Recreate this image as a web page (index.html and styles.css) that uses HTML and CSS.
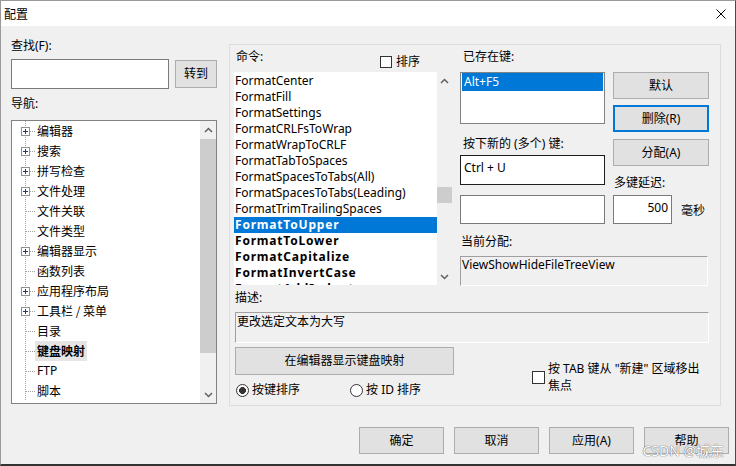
FILE: index.html
```html
<!DOCTYPE html>
<html lang="zh-CN">
<head>
<meta charset="utf-8">
<title>配置</title>
<link rel="stylesheet" href="styles.css">
</head>
<body>
<div class="window">
  <div class="titlebar">
    <span class="title">配置</span>
    <svg class="close" width="10" height="10" viewBox="0 0 10 10"><path d="M0.5 0.5L9.5 9.5M9.5 0.5L0.5 9.5" stroke="#000" stroke-width="1" fill="none"/></svg>
  </div>

  <div class="main">
    <div class="left">
      <div class="lbl find-lbl">查找(F):</div>
      <div class="find-row">
        <div class="edit find-edit"></div>
        <button class="btn go">转到</button>
      </div>
      <div class="lbl nav-lbl">导航:</div>
      <div class="tree">
        <ul class="tree-items">
          <li><span class="twig"><svg class="plus" width="9" height="9" viewBox="0 0 9 9" shape-rendering="crispEdges"><rect x="0.5" y="0.5" width="8" height="8" fill="#fff" stroke="#919191"/><path d="M2 4.5h5M4.5 2v5" stroke="#1e3a6e"/></svg></span><span class="node">编辑器</span></li>
          <li><span class="twig"><svg class="plus" width="9" height="9" viewBox="0 0 9 9" shape-rendering="crispEdges"><rect x="0.5" y="0.5" width="8" height="8" fill="#fff" stroke="#919191"/><path d="M2 4.5h5M4.5 2v5" stroke="#1e3a6e"/></svg></span><span class="node">搜索</span></li>
          <li><span class="twig"><svg class="plus" width="9" height="9" viewBox="0 0 9 9" shape-rendering="crispEdges"><rect x="0.5" y="0.5" width="8" height="8" fill="#fff" stroke="#919191"/><path d="M2 4.5h5M4.5 2v5" stroke="#1e3a6e"/></svg></span><span class="node">拼写检查</span></li>
          <li><span class="twig"><svg class="plus" width="9" height="9" viewBox="0 0 9 9" shape-rendering="crispEdges"><rect x="0.5" y="0.5" width="8" height="8" fill="#fff" stroke="#919191"/><path d="M2 4.5h5M4.5 2v5" stroke="#1e3a6e"/></svg></span><span class="node">文件处理</span></li>
          <li><span class="twig leaf"></span><span class="node">文件关联</span></li>
          <li><span class="twig leaf"></span><span class="node">文件类型</span></li>
          <li><span class="twig"><svg class="plus" width="9" height="9" viewBox="0 0 9 9" shape-rendering="crispEdges"><rect x="0.5" y="0.5" width="8" height="8" fill="#fff" stroke="#919191"/><path d="M2 4.5h5M4.5 2v5" stroke="#1e3a6e"/></svg></span><span class="node">编辑器显示</span></li>
          <li><span class="twig leaf"></span><span class="node">函数列表</span></li>
          <li><span class="twig"><svg class="plus" width="9" height="9" viewBox="0 0 9 9" shape-rendering="crispEdges"><rect x="0.5" y="0.5" width="8" height="8" fill="#fff" stroke="#919191"/><path d="M2 4.5h5M4.5 2v5" stroke="#1e3a6e"/></svg></span><span class="node">应用程序布局</span></li>
          <li><span class="twig"><svg class="plus" width="9" height="9" viewBox="0 0 9 9" shape-rendering="crispEdges"><rect x="0.5" y="0.5" width="8" height="8" fill="#fff" stroke="#919191"/><path d="M2 4.5h5M4.5 2v5" stroke="#1e3a6e"/></svg></span><span class="node">工具栏 / 菜单</span></li>
          <li><span class="twig leaf"></span><span class="node">目录</span></li>
          <li><span class="twig leaf"></span><span class="node current">键盘映射</span></li>
          <li><span class="twig leaf"></span><span class="node">FTP</span></li>
          <li><span class="twig leaf"></span><span class="node">脚本</span></li>
        </ul>
        <div class="vscroll tree-scroll">
          <div class="arrow"><svg width="9" height="6" viewBox="0 0 9 6"><polyline points="1,5 4.5,1.5 8,5" fill="none" stroke="#606060" stroke-width="1.5"/></svg></div>
          <div class="thumb tree-thumb"></div>
          <div class="track"></div>
          <div class="arrow"><svg width="9" height="6" viewBox="0 0 9 6"><polyline points="1,1 4.5,4.5 8,1" fill="none" stroke="#606060" stroke-width="1.5"/></svg></div>
        </div>
      </div>
    </div>

    <div class="group">
      <div class="mid">
        <div class="cmd-head">
          <div class="lbl cmd-lbl">命令:</div>
          <label class="sort"><span class="check"></span><span>排序</span></label>
        </div>
        <div class="cmd-list">
          <ul class="items">
            <li>FormatCenter</li>
            <li>FormatFill</li>
            <li>FormatSettings</li>
            <li>FormatCRLFsToWrap</li>
            <li>FormatWrapToCRLF</li>
            <li>FormatTabToSpaces</li>
            <li>FormatSpacesToTabs(All)</li>
            <li>FormatSpacesToTabs(Leading)</li>
            <li>FormatTrimTrailingSpaces</li>
            <li class="bold selected">FormatToUpper</li>
            <li class="bold">FormatToLower</li>
            <li class="bold">FormatCapitalize</li>
            <li class="bold">FormatInvertCase</li>
            <li class="bold">FormatAddIndent</li>
          </ul>
          <div class="vscroll cmd-scroll">
            <div class="arrow"><svg width="9" height="6" viewBox="0 0 9 6"><polyline points="1,5 4.5,1.5 8,5" fill="none" stroke="#606060" stroke-width="1.5"/></svg></div>
            <div class="thumb cmd-thumb"></div>
            <div class="track"></div>
            <div class="arrow"><svg width="9" height="6" viewBox="0 0 9 6"><polyline points="1,1 4.5,4.5 8,1" fill="none" stroke="#606060" stroke-width="1.5"/></svg></div>
          </div>
        </div>
      </div>

      <div class="right">
        <div class="rcol">
          <div class="lbl keys-lbl">已存在键:</div>
          <div class="listbox"><div class="sel">Alt+F5</div></div>
          <div class="lbl new-lbl">按下新的 (多个) 键:</div>
          <div class="edit key-edit focus">Ctrl + U</div>
          <div class="edit key-edit2"></div>
        </div>
        <div class="bcol">
          <button class="btn side">默认</button>
          <button class="btn side focused">删除(R)</button>
          <button class="btn side">分配(A)</button>
          <div class="lbl delay-lbl">多键延迟:</div>
          <div class="delay-row">
            <div class="edit delay-edit">500</div>
            <span class="unit">毫秒</span>
          </div>
        </div>
        <div class="assign">
          <div class="lbl cur-lbl">当前分配:</div>
          <div class="ro cur-box">ViewShowHideFileTreeView</div>
        </div>
      </div>

      <div class="desc">
        <div class="lbl desc-lbl">描述:</div>
        <div class="ro desc-box">更改选定文本为大写</div>
      </div>

      <div class="mid-bottom">
        <button class="btn show-map">在编辑器显示键盘映射</button>
        <div class="radios">
          <label class="radio-item"><span class="radio on"></span><span>按键排序</span></label>
          <label class="radio-item second"><span class="radio"></span><span>按 ID 排序</span></label>
        </div>
      </div>

      <div class="right-bottom">
        <label class="tab-opt"><span class="check"></span><span class="tab-text">按 TAB 键从 "新建" 区域移出焦点</span></label>
      </div>
    </div>
  </div>

  <div class="footer">
    <button class="btn foot">确定</button>
    <button class="btn foot">取消</button>
    <button class="btn foot">应用(A)</button>
    <button class="btn foot">帮助</button>
  </div>

  <div class="watermark">CSDN @城东</div>
</div>
</body>
</html>
```

FILE: styles.css
```css
* { box-sizing: border-box; }

html, body {
  margin: 0;
  padding: 0;
}

body {
  width: 736px;
  height: 466px;
  overflow: hidden;
  background: #f0f0f0;
  font-family: "Noto Sans", "Noto Sans CJK SC", sans-serif;
  font-size: 12px;
  color: #000;
}

ul { list-style: none; margin: 0; padding: 0; }

.window {
  position: relative;
  width: 736px;
  height: 466px;
  background: #f0f0f0;
  border-top: 1px solid #9a9a9a;
  border-left: 1px solid #9a9a9a;
  border-right: 1px solid #4a4a4a;
  border-bottom: 2px solid #333;
  display: flex;
  flex-direction: column;
}

.titlebar {
  height: 25px;
  flex: none;
  background: #fff;
  display: flex;
  align-items: center;
  justify-content: space-between;
  padding: 0 9px 0 3px;
}

.title {
  font-family: "Noto Sans CJK SC", sans-serif;
  font-size: 12px;
  line-height: 16px;
}

.close { display: block; }

.lbl {
  line-height: 16px;
  white-space: nowrap;
}

/* buttons */
.btn {
  font: inherit;
  color: #000;
  background: #e1e1e1;
  border: 1px solid #adadad;
  padding: 0;
  margin: 0;
  line-height: 16px;
  text-align: center;
}

.btn.focused {
  border: 2px solid #0078d7;
}

.edit {
  background: #fff;
  border: 1px solid #7a7a7a;
  line-height: 16px;
  padding: 4px 3px 0 3px;
  white-space: nowrap;
}

.edit.focus { border-color: #1e1e1e; }

.ro {
  background: #f0f0f0;
  border-style: solid;
  border-width: 1px;
  border-color: #a0a0a0 #fff #fff #a0a0a0;
  line-height: 16px;
  white-space: nowrap;
}

/* main */
.main {
  display: flex;
  padding-left: 10px;
  column-gap: 12px;
  flex: none;
}

.left {
  width: 206px;
  flex: none;
}

.find-lbl { margin-top: 12px; }

.find-row {
  margin-top: 5px;
  display: flex;
  align-items: center;
  column-gap: 6px;
}

.find-edit {
  width: 158px;
  height: 30px;
}

.go {
  width: 42px;
  height: 28px;
}

.nav-lbl { margin-top: 7px; }

.tree {
  margin-top: 8px;
  height: 284px;
  background: #fff;
  border: 1px solid #828282;
  display: flex;
}

.tree-items {
  flex: 1;
  font-family: "Noto Sans CJK SC", sans-serif;
}

.tree-items li {
  height: 20px;
  display: flex;
  align-items: center;
}

.twig {
  width: 23px;
  height: 20px;
  flex: none;
  display: flex;
  align-items: center;
  background-image:
    repeating-linear-gradient(to bottom, #a0a0a0 0 1px, transparent 1px 2px),
    repeating-linear-gradient(to right, #a0a0a0 0 1px, transparent 1px 2px);
  background-size: 1px 20px, 9px 1px;
  background-position: 13px 0, 14px 10px;
  background-repeat: no-repeat;
}

.plus {
  display: block;
  margin-left: 9px;
}

.node {
  line-height: 20px;
  padding: 0 2px;
  white-space: nowrap;
}

.node.current {
  background: #e5e5e5;
  font-weight: 700;
}

.tree-items li:nth-child(13) .node { font-family: "Noto Sans", sans-serif; }

/* scrollbars */
.vscroll {
  flex: none;
  background: #f0f0f0;
  display: flex;
  flex-direction: column;
}

.vscroll .arrow {
  height: 17px;
  display: flex;
  align-items: center;
  justify-content: center;
}

.vscroll .arrow svg { display: block; }

.vscroll .thumb {
  background: #cdcdcd;
  flex: none;
}

.vscroll .track { flex: 1; }

.tree-scroll { width: 16px; }

.tree-thumb {
  margin-top: 1px;
  height: 214px;
}

/* group box */
.group {
  margin-top: 18px;
  width: 492px;
  height: 362px;
  border: 1px solid #dcdcdc;
  padding: 0 11px 0 4px;
  display: grid;
  grid-template-columns: 219px 249px;
  grid-template-rows: auto auto auto;
  column-gap: 7px;
  align-content: start;
}

.cmd-head {
  height: 27px;
  display: grid;
  grid-template-columns: 146px auto;
}

.cmd-lbl {
  padding-top: 4px;
  padding-left: 2px;
}

.sort {
  margin-top: 9px;
  display: flex;
  align-items: center;
  column-gap: 4px;
  height: 16px;
  line-height: 16px;
}

.check {
  display: block;
  width: 13px;
  height: 13px;
  background: #fff;
  border: 1px solid #333;
  flex: none;
}

.sort .check { width: 12px; height: 12px; }

.cmd-list {
  display: flex;
  height: 213px;
}

.items {
  width: 203px;
  background: #fff;
  padding-top: 1px;
  overflow: hidden;
}

.items li {
  height: 16px;
  line-height: 16px;
  padding-left: 1px;
  white-space: nowrap;
}

.items li.bold {
  font-weight: 700;
  letter-spacing: 0.8px;
}

.items li.selected {
  background: #0078d7;
  color: #fff;
}

.cmd-scroll { width: 15px; }

.cmd-thumb {
  margin-top: 98px;
  height: 16px;
}

/* right side */
.right {
  display: grid;
  grid-template-columns: 145px 96px;
  column-gap: 8px;
  align-content: start;
}

.rcol, .bcol {
  display: flex;
  flex-direction: column;
}

.keys-lbl {
  height: 27px;
  padding-top: 4px;
  padding-left: 3px;
}

.listbox {
  height: 52px;
  background: #fff;
  border: 1px solid #828282;
  padding: 0 1px;
}

.sel {
  height: 18px;
  line-height: 18px;
  background: #0078d7;
  color: #fff;
  padding-left: 2px;
}

.new-lbl {
  margin-top: 12px;
  padding-left: 3px;
}

.key-edit {
  margin-top: 3px;
  height: 30px;
}

.key-edit2 {
  margin-top: 10px;
  height: 29px;
}

.bcol { padding-top: 27px; }

.side {
  width: 96px;
  height: 27px;
}

.side + .side { margin-top: 6px; }
.side:nth-child(3) { margin-top: 7px; }

.delay-lbl {
  margin-top: 9px;
  padding-left: 1px;
}

.delay-row {
  margin-top: 4px;
  display: flex;
  align-items: center;
}

.delay-edit {
  width: 59px;
  height: 29px;
  text-align: right;
  padding-right: 3px;
}

.unit {
  margin-left: 9px;
  line-height: 16px;
  white-space: nowrap;
  margin-top: 3px;
}

.assign { grid-column: 1 / 3; }

.cur-lbl {
  margin-top: 10px;
  padding-left: 1px;
}

.cur-box {
  margin-top: 6px;
  width: 248px;
  height: 30px;
  padding: 0 0 0 1px;
}

/* description */
.desc { grid-column: 1 / 3; }

.desc-lbl {
  margin-top: 4px;
  padding-left: 1px;
}

.desc-box {
  margin-top: 6px;
  margin-left: 1px;
  width: 474px;
  height: 31px;
  padding: 1px 1px 0 1px;
}

.show-map {
  margin-top: 4px;
  margin-left: 1px;
  width: 219px;
  height: 28px;
}

.radios {
  margin-top: 7px;
  display: flex;
  align-items: center;
  height: 16px;
}

.radio-item {
  display: flex;
  align-items: center;
  column-gap: 3px;
  line-height: 16px;
  white-space: nowrap;
}

.radio-item:first-child { margin-left: 2px; }

.radio-item.second { margin-left: 50px; }

.radio {
  display: block;
  width: 13px;
  height: 13px;
  border: 1px solid #333;
  border-radius: 50%;
  background: #fff;
  flex: none;
}

.radio.on {
  background: radial-gradient(circle, #333 0 3.2px, #fff 3.7px);
}

.right-bottom { padding-left: 72px; }

.tab-opt {
  margin-top: 17px;
  display: flex;
  align-items: center;
  column-gap: 3px;
}

.tab-text {
  width: 162px;
  line-height: 17px;
}

/* footer */
.footer {
  margin-top: 21px;
  display: flex;
  justify-content: flex-end;
  column-gap: 10px;
  padding-right: 6px;
}

.foot {
  width: 85px;
  height: 27px;
}

.watermark {
  position: absolute;
  right: 11px;
  bottom: 5px;
  font-size: 14px;
  line-height: 16px;
  color: #fff;
  text-shadow: 0 0 1px #666, 0 0 1px #666;
  white-space: nowrap;
}
```
